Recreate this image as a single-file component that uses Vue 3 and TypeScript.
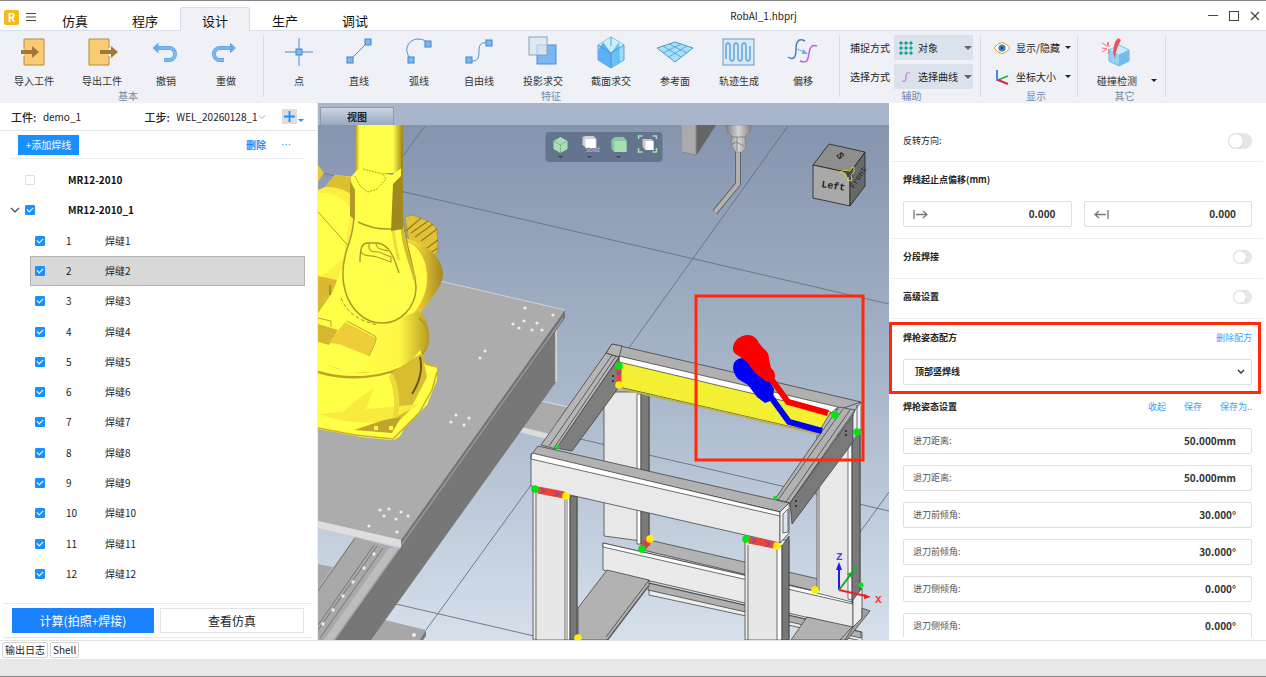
<script setup lang="ts">
import { ref } from 'vue'

interface Tool { label: string; icon: string; wide?: boolean }
interface Seam { id: number; name: string; checked: boolean }
interface Field { id: string; label: string; value: string }

const tabs = ['仿真', '程序', '设计', '生产', '调试']
const activeTab = ref('设计')

const node = (x: number, y: number) =>
  `<rect x="${x - 3}" y="${y - 3}" width="6" height="6" fill="#7ab8f5" stroke="#4385c7"/>`

const basicTools: Tool[] = [
  { label: '导入工件', wide: true, icon: '<path d="M5 12V2h20v26H5v-9" fill="#fbcb74" stroke="#b58a3e"/><path d="M2 13h11v-4l7 6-7 6v-4H2z" fill="#a07838"/>' },
  { label: '导出工件', wide: true, icon: '<path d="M22 11V2H2v26h20v-9" fill="#fbcb74" stroke="#b58a3e"/><path d="M13 13h11v-4l7 6-7 6v-4H13z" fill="#a07838"/>' },
  { label: '撤销', icon: '<path d="M6 11h12a6 6 0 0 1 0 12h-5" fill="none" stroke="#5c9fe0" stroke-width="4"/><path d="M6 11h12a6 6 0 0 1 0 12h-5" fill="none" stroke="#7ab8f5" stroke-width="2.6"/><path d="M1.500 11l6-5.500v11z" fill="#6aabec"/>' },
  { label: '重做', icon: '<path d="M20 11H9a6 6 0 0 0 0 12h4" fill="none" stroke="#5c9fe0" stroke-width="4"/><path d="M20 11H9a6 6 0 0 0 0 12h4" fill="none" stroke="#7ab8f5" stroke-width="2.6"/><path d="M25 11l-6-5.500v11z" fill="#6aabec"/>' }
]

const featureTools: Tool[] = [
  { label: '点', icon: '<path d="M1 15h28M15 1v28" stroke="#4b8fce"/>' + node(15, 15) },
  { label: '直线', icon: '<path d="M6 23L24 5" stroke="#4b8fce"/>' + node(6, 23) + node(24, 5) },
  { label: '弧线', icon: '<path d="M7 22C-2 13 5 2 14 2c5 0 8 2 11 5" fill="none" stroke="#4b8fce"/>' + node(7, 23) + node(24, 7) },
  { label: '自由线', icon: '<path d="M5 24c7 0 10 0 10-10 0-8 3-9 10-8" fill="none" stroke="#4b8fce"/>' + node(5, 23) + node(25, 6) },
  { label: '投影求交', wide: true, icon: '<rect x="9" y="8" width="19" height="19" fill="#7ab6f4" stroke="#4f8fd2"/><rect x="1" y="0" width="18" height="18" fill="#dce9f1" fill-opacity=".9" stroke="#8ba2b2"/><path d="M9 18V8h10" fill="none" stroke="#a9cdea"/>' },
  { label: '截面求交', wide: true, icon: '<path d="M15 0l13 8v15l-13 8-13-8V8z" fill="#9bdcfb" stroke="#5ba3d2"/><path d="M15 0l13 8-13 8L2 8z" fill="#c9eefc"/><path d="M7 5l8 11v15L2 23V14z" fill="#5cb0f4"/><path d="M15 16l8-11 1 20-9 6z" fill="#69c0f6"/><path d="M2 8l13 8 13-8M15 16v15M15 0v9" fill="none" stroke="#3f8fc9" stroke-width=".8"/>' },
  { label: '参考面', icon: '<path d="M-3 11l18-6 18 6-18 14z" fill="#a4e0fc" stroke="#5796c9"/><path d="M3 9l18 11M9 7l18 9M3 16L21 7M9 20l18-11" stroke="#5796c9" stroke-width=".8"/>' },
  { label: '轨迹生成', wide: true, icon: '<rect x="-1" y="2" width="31" height="26" fill="#dceaf3" stroke="#6d9cc2"/><path d="M2 22V8q2-4 4 0v14q2 4 4 0V8q2-4 4 0v14q2 4 4 0V8q2-4 4 0v14q2 4 4 0V9" fill="none" stroke="#72aee8" stroke-width="1.800"/>' },
  { label: '偏移', icon: '<path d="M0 20c6 4 8 0 8-8S11 1 17 4" fill="none" stroke="#4383bd" stroke-width="1.500"/><path d="M12 24c8 3 8-2 9-8s3-9 8-7" fill="none" stroke="#c65de6" stroke-width="1.500"/><path d="M9 12l7 3" stroke="#69aef0"/><path d="M15 12l5 5-6 0z" fill="#69aef0"/>' }
]

const seams = ref<Seam[]>(Array.from({ length: 12 }, (_, i) => ({ id: i + 1, name: `焊缝${i + 1}`, checked: true })))
const selected = ref(2)
const firstGroup = ref(false)
const secondGroup = ref(true)

const startOffset = ref('0.000')
const endOffset = ref('0.000')

const fields = ref<Field[]>([
  { id: 'in-dist', label: '进刀距离:', value: '50.000mm' },
  { id: 'out-dist', label: '退刀距离:', value: '50.000mm' },
  { id: 'in-front', label: '进刀前倾角:', value: '30.000°' },
  { id: 'out-front', label: '退刀前倾角:', value: '30.000°' },
  { id: 'in-side', label: '进刀侧倾角:', value: '0.000°' },
  { id: 'out-side', label: '退刀侧倾角:', value: '0.000°' }
])

const tableHoles = [
  [525, 308], [553, 315], [524, 321], [537, 323], [519, 328], [532, 330], [513, 324], [542, 330],
  [485, 351], [480, 358], [456, 415], [469, 418], [451, 422], [464, 425],
  [389, 509], [401, 512], [384, 516], [396, 519], [380, 510], [408, 516], [369, 526], [397, 532]
]
const railHoles = [[374, 554], [364, 568], [353, 582], [343, 596], [333, 610], [323, 624]]
const greenNodes = [[619, 366], [535, 489], [746, 539], [642, 549], [835, 415], [857, 432]]
const yellowNodes = [[619, 385], [566, 496], [777, 546], [650, 539], [815, 590], [578, 638]]
</script>

<template>
  <div class="app">
    <header class="titlebar">
      <div class="brand">
        <svg class="logo" viewBox="0 0 15 15"><rect width="15" height="15" rx="2" fill="#f5b91d" /><text x="7.500" y="11.500" text-anchor="middle" fill="#fff" font-size="11" font-weight="700">R</text></svg>
        <button class="plain" aria-label="菜单"><svg width="12" height="10" viewBox="0 0 12 10"><path d="M1 1.500h10M1 5h10M1 8.500h10" stroke="#444" /></svg></button>
      </div>
      <nav class="tabs">
        <button v-for="t in tabs" :key="t" class="tab" :class="{ active: t === activeTab }" @click="activeTab = t">{{ t }}</button>
      </nav>
      <div class="doc-title">RobAI_1.hbprj</div>
      <div class="win-controls">
        <button class="plain" aria-label="最小化"><svg width="10" height="10" viewBox="0 0 10 10"><path d="M0 4.500h10" stroke="#444" /></svg></button>
        <button class="plain" aria-label="最大化"><svg width="10" height="10" viewBox="0 0 10 10"><rect x=".5" y=".5" width="9" height="9" fill="none" stroke="#444" /></svg></button>
        <button class="plain" aria-label="关闭"><svg width="10" height="10" viewBox="0 0 10 10"><path d="M1 1l8 8M9 1l-8 8" stroke="#444" stroke-width="1.200" /></svg></button>
      </div>
    </header>

    <section class="ribbon">
      <div class="group basic">
        <div class="tools">
          <button v-for="t in basicTools" :key="t.label" class="tool" :class="{ wide: t.wide }">
            <svg viewBox="0 0 30 30" v-html="t.icon" /><span>{{ t.label }}</span>
          </button>
        </div>
        <div class="group-name">基本</div>
      </div>
      <div class="group feature">
        <div class="tools">
          <button v-for="t in featureTools" :key="t.label" class="tool" :class="{ wide: t.wide }">
            <svg viewBox="0 0 30 30" v-html="t.icon" /><span>{{ t.label }}</span>
          </button>
        </div>
        <div class="group-name">特征</div>
      </div>
      <div class="group assist">
        <div class="stack">
          <div class="pick">
            <label for="snap">捕捉方式</label>
            <div class="combo">
              <svg width="14" height="14" viewBox="0 0 14 14"><path d="M2 0v14M7 0v14M12 0v14M0 2h14M0 7h14M0 12h14" stroke="#7fc9c4" /><g fill="#14a098"><circle v-for="n in 9" :key="n" :cx="2 + ((n - 1) % 3) * 5" :cy="2 + Math.floor((n - 1) / 3) * 5" r="1.600" /></g></svg>
              <select id="snap"><option>对象</option></select><i class="caret grey" />
            </div>
          </div>
          <div class="pick">
            <label for="sel">选择方式</label>
            <div class="combo">
              <svg width="14" height="14" viewBox="0 0 14 14"><path d="M3 11c4 1 4-1 4-4s0-5 4-4" fill="none" stroke="#c77be8" stroke-width="1.200" /></svg>
              <select id="sel"><option>选择曲线</option></select><i class="caret grey" />
            </div>
          </div>
        </div>
        <div class="group-name">辅助</div>
      </div>
      <div class="group display">
        <div class="stack">
          <button class="row-tool">
            <svg width="16" height="12" viewBox="0 0 16 12"><path d="M0 6q8-11 16 0-8 11-16 0z" fill="#fff" stroke="#d5a033" /><circle cx="8" cy="6" r="3.500" fill="#3e7cc4" /><circle cx="8" cy="6" r="1.300" fill="#173f74" /></svg>
            <span>显示/隐藏</span><i class="caret" />
          </button>
          <button class="row-tool">
            <svg width="16" height="16" viewBox="0 0 16 16"><path d="M4 11l10-4" stroke="#13b545" stroke-width="1.800" /><path d="M4 11l10 4" stroke="#e8262d" stroke-width="2" /><path d="M3 1v11" stroke="#1d6fe8" stroke-width="1.600" /></svg>
            <span>坐标大小</span><i class="caret" />
          </button>
        </div>
        <div class="group-name">显示</div>
      </div>
      <div class="group other">
        <div class="tools">
          <button class="tool wide">
            <svg viewBox="0 0 30 30"><path d="M7 13l10-5 10 5v11l-10 5-10-5z" fill="#8fd3f7" stroke="#6fb3da" /><path d="M7 13l10-5 10 5-10 5z" fill="#c2ebfc" stroke="#7fc1e4" stroke-width=".6" /><path d="M17 18v11l10-5V13z" fill="#74bdea" /><path d="M13 5l3-4 3 2-3 6-2 6-1 7-2-7 1-6z" fill="#e95460" /><path d="M0 6l5 3 1-4 1 5M0 15l5-3-5-1M6 17l1-5" fill="none" stroke="#f0737a" /></svg>
            <span>碰撞检测</span>
          </button>
          <i class="caret low" />
        </div>
        <div class="group-name">其它</div>
      </div>
    </section>

    <main class="work">
      <aside class="left">
        <div class="job">
          <b>工件:</b><span class="part">demo_1</span>
          <label for="step">工步:</label>
          <select id="step"><option>WEL_20260128_1</option></select>
          <svg width="6" height="4" viewBox="0 0 6 4"><path d="M0 .5l3 3 3-3" fill="none" stroke="#aaa" /></svg>
          <button class="plus" aria-label="新增"><svg width="11" height="11" viewBox="0 0 11 11"><path d="M5.500 0v11M0 5.500h11" stroke="#1890ff" stroke-width="1.800" /></svg></button>
          <i class="caret blue" />
        </div>
        <div class="actions">
          <button class="add">+添加焊线</button>
          <button class="plain remove">删除</button>
          <button class="plain more">···</button>
        </div>
        <ul class="tree">
          <li class="parent"><span class="arrow" /><input id="g1" v-model="firstGroup" type="checkbox" class="check"><label for="g1">MR12-2010</label></li>
          <li class="parent"><span class="arrow"><svg width="10" height="6" viewBox="0 0 10 6"><path d="M1 1l4 4 4-4" fill="none" stroke="#444" stroke-width="1.200" /></svg></span><input id="g2" v-model="secondGroup" type="checkbox" class="check"><label for="g2">MR12-2010_1</label></li>
          <li v-for="s in seams" :key="s.id" class="seam" :class="{ selected: s.id === selected }" @click="selected = s.id">
            <input :id="'seam' + s.id" v-model="s.checked" type="checkbox" class="check"><span class="num">{{ s.id }}</span><label :for="'seam' + s.id">{{ s.name }}</label>
          </li>
        </ul>
        <div class="run">
          <button class="primary">计算(拍照+焊接)</button>
          <button class="secondary">查看仿真</button>
        </div>
      </aside>

      <section class="center">
        <div class="view-tabs"><button class="view-tab">视图</button></div>
        <div class="viewport">
          <svg class="scene" viewBox="318 125 571 515" preserveAspectRatio="xMidYMid slice">
            <defs>
              <linearGradient id="sky" x1="0" y1="0" x2="0" y2="1"><stop offset="0" stop-color="#8695ae" /><stop offset=".5" stop-color="#a8b6ca" /><stop offset="1" stop-color="#d6e0eb" /></linearGradient>
              <linearGradient id="metal" x1="0" y1="0" x2="1" y2="0"><stop offset="0" stop-color="#808080" /><stop offset=".5" stop-color="#d4d4d4" /><stop offset="1" stop-color="#858585" /></linearGradient>
              <linearGradient id="arm" x1="0" y1="0" x2="1" y2="0"><stop offset="0" stop-color="#c4a526" /><stop offset=".08" stop-color="#ffff4a" /><stop offset=".8" stop-color="#ffff4a" /><stop offset="1" stop-color="#a88f20" /></linearGradient>
              <linearGradient id="drum" x1="0" y1="0" x2="1" y2="0"><stop offset="0" stop-color="#ffe93f" /><stop offset=".45" stop-color="#eacb37" /><stop offset="1" stop-color="#a38920" /></linearGradient>
              <linearGradient id="waist" x1="0" y1="0" x2="1" y2="0"><stop offset="0" stop-color="#ffff48" /><stop offset=".65" stop-color="#fff744" /><stop offset="1" stop-color="#b99c24" /></linearGradient>
            </defs>
            <rect x="318" y="125" width="571" height="515" fill="url(#sky)" />
            <g stroke="#66727f" stroke-width=".9">
              <path d="M425 126L400 160M318 172L889 304M788 126L628 349M531 485L426 630M396 604L534 636M576 438L889 511M889 492L858 535" />
            </g>

            <!-- work table and rail -->
            <path d="M318 564l15 3-15 22zM385 620l41 10-4 10h-53z" fill="#a7a7a7" />
            <path d="M426 630v6l-3 4h-3z" fill="#777" />
            <path d="M541 401l27 6-20 26-27-6z" fill="#aaa" /><path d="M521 427l28 7-2 5-28-7z" fill="#dcdcdc" />
            <path d="M541 401l27 6" stroke="#ddd" />
            <path d="M355 537l46 12-65 91h-18v-51z" fill="#a9a9a9" />
            <path d="M355 538l-37 53M374 545l-56 80M383 548l-63 90M377 546l-59 84" stroke="#686868" stroke-width=".8" />
            <path d="M389 548l-65 92h9l66-93z" fill="#bdbdbd" />
            <path d="M556 329v53L371 640h-36l66-93z" fill="#777" />
            <path d="M556 330v52" stroke="#ddd" stroke-width="1.500" />
            <path d="M318 260l122 21 125 29-164 230-83-19z" fill="#acacac" />
            <path d="M440 281l125 29" stroke="#d2d2d2" />
            <path d="M318 521l83 19v7l-83-19z" fill="#dedede" /><path d="M565 310v8L401 547v-7z" fill="#747474" />
            <path d="M563 318L401 545" stroke="#bcbcbc" stroke-width=".8" />
            <g fill="#ededed"><circle v-for="(h, i) in tableHoles" :key="'t' + i" :cx="h[0]" :cy="h[1]" r="1.600" /><circle v-for="(h, i) in railHoles" :key="'r' + i" :cx="h[0]" :cy="h[1]" r="1.700" /><circle cx="414" cy="635" r="2" /></g>

            <!-- robot arm -->
            <path d="M318 165l6 8-6 9z" fill="#e5c837" />
            <path d="M405 217l8-2 17 7 7 7 1 22-7 7-22-16z" fill="#e1c237" stroke="#a18924" stroke-width=".6" />
            <path d="M411 233l17-12M415 237l18-13M421 241l16-12M427 248l11-8M430 253l8-5M406 231l15-13" stroke="#927b1f" stroke-width="1.200" />
            <path d="M404 238c18 3 39 18 39 36 0 12-15 28-24 42l-20 9z" fill="url(#drum)" />
            <path d="M402 240c22 3 32 34 21 59-7 17-18 22-28 24z" fill="#fffb47" stroke="#cbb02b" stroke-width=".7" />
            <path d="M318 190l7-3 10-12 20 2 4 18-7 60-20 65-14 5z" fill="#fcef42" />
            <path d="M325 187l10-12 17 2v18c-9-7-18-8-27-8z" fill="#dcc034" />
            <path d="M318 193c15-1 27 4 33 18l-8 48-25 20z" fill="#ffff4a" />
            <path d="M318 212l34 38" stroke="#bd9d27" />
            <path d="M318 276l19 4-6 26-13 9z" fill="#d8b92f" /><path d="M330 285v10l6-3" fill="none" stroke="#806d20" />
            <path d="M342 268l-10 25-14 20v49l90 30 15-60-55-20z" fill="#ffff48" />
            <path d="M341 298c6 16 21 24 37 27" fill="none" stroke="#ac9125" stroke-dasharray="4 2" />
            <path d="M318 324l20 6-9 15-11-3z" fill="#d5b72f" />
            <path d="M377 326l42-15c10 9 12 23 8 37-9 18-37 29-61 26l-21-10 26-5z" fill="url(#waist)" />
            <path d="M338 331l7-9 31 16-7 18-30-12-10-1z" fill="#eecd38" />
            <path d="M318 318l13 3v6M347 321l28 15c3 3-1 9-6 20" fill="none" stroke="#c0a129" />
            <path d="M419 318c10 8 13 24 4 35-10 14-37 22-69 20" fill="none" stroke="#b69a26" stroke-width="2" />
            <path d="M318 360c25 16 62 17 94 0l8-10 6 14 11 2v14l-10 25-23 23c-2 8-7 12-13 12l-30-3-43-8z" fill="#ffff46" />
            <path d="M318 372c30 9 65 7 94-9" fill="none" stroke="#bea128" stroke-width="2.500" />
            <path d="M391 373l31-20 5 24-17 33-13 13z" fill="#dabc31" />
            <path d="M350 405l-12 13 23 4 13-34zM318 414c25 9 63 13 80 2l22-12" fill="#f9ea40" />
            <path d="M391 375c7 17 7 33 3 46" fill="none" stroke="#eadb3c" stroke-width="5" />
            <path d="M420 357c3 13-1 26-8 37" stroke="#66591b" stroke-width="2" fill="none" />
            <path d="M354 430l30-10 17-3-9 16z" fill="#c1a42b" />
            <path d="M318 428l37 7 38 4 26-26 13-23 5-18M421 356l5 8 11 3" fill="none" stroke="#cdae2b" stroke-width="1.500" />
            <g fill="#fff64b"><rect x="374" y="426" width="4" height="4" /><rect x="389" y="426" width="4" height="4" /><rect x="427" y="372" width="4" height="4" /></g>
            <path d="M354 218c-1 14-4 23-7 31-4 13-6 27-2 41 5 20 21 34 38 33 17 0 32-15 33-34 0-18-12-48-13-72z" fill="#ffff4b" stroke="#b2962a" stroke-width="1.500" />
            <path d="M393 230c2 15 3 22 6 30" fill="none" stroke="#eddb3b" stroke-width="3" />
            <path d="M402 226c1 22 9 37 13 54" fill="none" stroke="#d3ba2e" stroke-width="3" />
            <path d="M360 262c0-12 1-19 8-19h9c12 1 17 14 22 30" fill="none" stroke="#aa9126" stroke-width="1.300" />
            <path d="M361 251c1 6 9 4 16 6l14 5v-5l-12-5c-6 0-11 0-10-8M376 243c0 6 5 6 12 8" fill="none" stroke="#b79d28" stroke-width="1.200" />
            <path d="M356 125h46v48H356z" fill="url(#arm)" />
            <path d="M351 177l6-7 5-1 30 6 11-8-4 64-16-1-24-7-9-8z" fill="#ffff47" />
            <path d="M393 184l8-8 1-51h1v104l-12 2z" fill="#a08a20" /><path d="M350 180l5 10v30l-5-4z" fill="#b49a25" />
            <path d="M363 169l20 5 3 5-9 10-9 3-8-6-5-10" fill="none" stroke="#9d861f" stroke-width=".8" stroke-dasharray="2 1" />
            <path d="M358 222q16 8 34 7" fill="none" stroke="#b1982a" stroke-width="1.500" />

            <!-- lower frame -->
            <g stroke="#333" stroke-width=".7" stroke-linejoin="round">
              <path d="M604 392h45v150l-45-6z" fill="#e8e8e8" /><path d="M637 394h4v150h-4z" fill="#fff" /><path d="M641 394h8v148l-8 2z" fill="#7b7b7b" />
              <path d="M649 583l213 49v9l-213-46z" fill="#ededed" /><path d="M648 583l213 49v6l-213-48z" fill="#b0b0b0" />
              <path d="M649 540l213 49-9 11-210-50z" fill="#b3b3b3" />
              <path d="M603 543l250 57v28l-250-58z" fill="#eaeaea" /><path d="M603 543l250 57v4l-250-57z" fill="#fff" />
              <path d="M817 435h43v163l-8 4-35-9z" fill="#e8e8e8" /><path d="M848 440h4v160l-4-1z" fill="#fff" /><path d="M852 441l8-13v165l-8 10z" fill="#797979" /><path d="M819 440v151" fill="none" />
              <path d="M853 600l9-12v30l-9 12z" fill="#eee" />
              <path d="M862 608l8 3-23 29h-11l16-12 10-10z" fill="#a0a0a0" />
              <path d="M607 570l42 10v6l-41 54h-30v-32z" fill="#b2b2b2" /><path d="M649 580l-43 57M648 586l-41 54" fill="none" />
              <path d="M807 617l46 10-8 13h-54z" fill="#b2b2b2" /><path d="M852 627l-12 13" />
            </g>
            <path d="M642 549l8-11" stroke="#e9423a" stroke-width="7" />

            <!-- upper frame -->
            <g stroke="#333" stroke-width=".7" stroke-linejoin="round">
              <path d="M612 344l249 58-23 8-232-57z" fill="#b0b0b0" />
              <path d="M619 356l219 51-8 7-211-49z" fill="#fff" />
              <path d="M619 362l212 50-13 21-199-46z" fill="#f3f033" />
              <path d="M622 388l196 45v2l-196-45z" fill="#b8b25c" stroke="none" />
              <path d="M619 357v30l-47 64-16-3z" fill="#7e7e7e" />
              <path d="M606 353l13 4-63 92-15-4z" fill="#b5b5b5" /><path d="M612 355l-63 91M616 356l-62 92" fill="none" />
              <path d="M606 353l6-9 10 2-3 11z" fill="#b5b5b5" />
              <path d="M855 410l6-8v29l-9 11v-24z" fill="#f0f0f0" /><path d="M852 440l9-11M857 405v28" />
              <path d="M839 407l16 3-65 93-15-4z" fill="#b1b1b1" /><path d="M843 409l-65 91M850 410l-64 92" fill="none" />
              <path d="M853 415v27l-61 82-2-21z" fill="#797979" />
              <path d="M533 486h44v154h-44z" fill="#e7e7e7" /><path d="M565 494h5v146h-5z" fill="#fff" /><path d="M570 496h7v144h-7z" fill="#777" /><path d="M536 490v150M567 498v142" />
              <path d="M745 540h44v100h-44z" fill="#e7e7e7" /><path d="M777 546h5v94h-5z" fill="#fff" /><path d="M782 546l7-10v104h-7z" fill="#777" /><path d="M748 545v95" />
              <path d="M538 446l251 57-9 9-248-58z" fill="#b1b1b1" />
              <path d="M531 454l249 58v31l-249-57z" fill="#e9e9e9" /><path d="M532 453l248 59v4l-249-57z" fill="#fff" />
              <path d="M780 512l9-9v30l-9 10z" fill="#f0f0f0" /><path d="M783 514l5-5v23l-5 1z" fill="#dce4ee" />
            </g>
            <g fill="#222"><circle cx="846" cy="431" r="1" /><circle cx="846" cy="435" r="1" /><circle cx="796" cy="501" r="1" /><circle cx="796" cy="506" r="1" /><circle cx="613" cy="376" r="1" /><circle cx="613" cy="381" r="1" /></g>
            <g stroke="#ef4338" stroke-width="7"><path d="M538 490l26 5M749 540l25 5" /><path d="M619 367v16" stroke-width="5" /></g>
            <g fill="none" stroke="#4055c7"><path d="M541 488l4 3-4 2M555 491l4 3-5 2M752 538l4 3-4 2M765 541l5 3-5 3M617 371l2 4 2-4M645 541l1 5 4-1" /></g>
            <g fill="#00e315"><circle v-for="(n, i) in greenNodes" :key="'g' + i" :cx="n[0]" :cy="n[1]" r="3.800" /><circle cx="775" cy="498" r="2" /><circle cx="558" cy="447" r="2" /><circle cx="861" cy="585" r="2.500" /><path d="M534 640q1-3 4 0z" /></g>
            <g fill="#fff000"><circle v-for="(n, i) in yellowNodes" :key="'y' + i" :cx="n[0]" :cy="n[1]" r="3.800" /></g>

            <!-- weld torches -->
            <path d="M768 393l21 29 33 9" fill="none" stroke="#0000fa" stroke-width="6" />
            <path d="M734 363q3-5 9-5l12 8 14 14 5 9-1 11-8 3-8-6-9-12-10-6q-7-8-4-16z" fill="#0000fa" />
            <path d="M769 376l19 26 40 11" fill="none" stroke="#fa0000" stroke-width="6" />
            <path d="M733 347q2-10 13-12 9-1 13 8l4 5q6 4 6 11l2 9q6 5 3 12-5 5-11-1l-7-5-9-12-8-6q-7-3-6-9z" fill="#fa0000" />

            <!-- hanging torch -->
            <path d="M682 125h14v30l-14-3z" fill="#aaa" /><path d="M696 125h20l-18 28-2 2z" fill="#656565" /><path d="M682 152l14 3v-30" fill="none" stroke="#888" />
            <path d="M738 151v33l-23 28" fill="none" stroke="#666" stroke-width="6" /><path d="M738 151v33l-23 28" fill="none" stroke="#b2b2b2" stroke-width="4" />
            <path d="M726 125h25q0 9-6 11l1 11-4 5h-6l-5-7 1-9q-6-3-6-11z" fill="url(#metal)" stroke="#777" stroke-width=".5" />
            <path d="M731 137h14M731 145l5-3 8 4M737 137v14" fill="none" stroke="#777" stroke-width=".8" />

            <!-- orientation cube -->
            <g stroke="#222" stroke-width=".8" stroke-linejoin="round">
              <path d="M829 144l36 8-15 21-37-8z" fill="#8e8e8e" /><path d="M813 165l37 8v33l-37-8z" fill="#a9a9a9" /><path d="M850 173l15-21v34l-15 20z" fill="#696969" />
            </g>
            <g class="cube-text">
              <text x="821" y="187" transform="rotate(9 821 187)">Left</text>
              <text x="854" y="189" transform="rotate(-58 854 189)" class="small">Front</text>
              <text x="836" y="155" transform="rotate(55 836 155)">S</text>
            </g>
            <path d="M845 171l7-2 1 9-6-1z" fill="#484848" /><path d="M840 172l5-2 5 1 2-4h2v5l-3 3 1 5-4 1-2-6z" fill="none" stroke="#d5cd31" />

            <!-- axes -->
            <g stroke-width="2"><path d="M839 590v-22" stroke="#1c1cec" /><path d="M839 590l12-16" stroke="#19a52d" /><path d="M839 590l27 6" stroke="#ec2020" /></g>
            <path d="M839 562l3 8h-6z" fill="#1c1cec" /><path d="M854 571l-2 7-5-4z" fill="#19a52d" /><path d="M871 597l-7 2v-5z" fill="#ec2020" />
            <g class="axis"><text x="836" y="560" fill="#4545eb">Z</text><text x="852" y="572" fill="#20ad35">Y</text><text x="875" y="603" fill="#ef3838">X</text></g>

            <rect x="696" y="296" width="167" height="164" fill="none" stroke="#ff2a0a" stroke-width="3" />
          </svg>
          <div class="view-tools">
            <button aria-label="视角"><svg viewBox="0 0 18 24"><path d="M9 2l7 4v8l-7 4-7-4V6z" fill="#a6dfb4" /><path d="M2 6l7 4 7-4M9 10v8" fill="none" stroke="#6da57c" stroke-dasharray="2 1" /><path d="M6 21h6l-3 2z" fill="#39445a" /></svg></button>
            <button aria-label="显示模式"><svg viewBox="0 0 18 24"><path d="M2 2l3-1h8l3 3v9H6l-4-3z" fill="#d1d1d1" /><path d="M5 4h10v9H5z" fill="#fff" /><text x="5" y="17" font-size="6" fill="#bfd0df">Solid</text><path d="M6 21h6l-3 2z" fill="#39445a" /></svg></button>
            <button aria-label="背景"><svg viewBox="0 0 18 24"><path d="M2 5l3-3h9l3 3v12H5l-3-3z" fill="#8ac99c" /><path d="M5 6h12v11H5z" fill="#a6dfb4" /><path d="M6 21h6l-3 2z" fill="#39445a" /></svg></button>
            <button aria-label="全部显示"><svg viewBox="0 0 18 24"><path d="M0 4V1h4M14 1h4v3M0 13v4h4M14 17h4v-4" fill="none" stroke="#a6dfb4" stroke-width="1.500" /><path d="M4 4h9l2 2v9H7l-3-3z" fill="#c8c8c8" /><path d="M7 6h8v9H7z" fill="#fff" /></svg></button>
          </div>
        </div>
      </section>

      <aside class="right">
        <div class="props">
          <div class="row first"><label for="reverse" class="light">反转方向:</label><input id="reverse" type="checkbox" class="switch large"></div>
          <div class="offsets">
            <h3>焊线起止点偏移(mm)</h3>
            <div class="pair">
              <div class="field"><label for="so" aria-label="起点偏移"><svg width="15" height="9" viewBox="0 0 15 9"><path d="M1 0v9M3 4.500h11M10 1l4 3.500L10 8" fill="none" stroke="#777" stroke-width="1.300" /></svg></label><input id="so" v-model="startOffset"></div>
              <div class="field"><label for="eo" aria-label="终点偏移"><svg width="15" height="9" viewBox="0 0 15 9"><path d="M14 0v9M12 4.500H1M5 1L1 4.500 5 8" fill="none" stroke="#777" stroke-width="1.300" /></svg></label><input id="eo" v-model="endOffset"></div>
            </div>
          </div>
          <div class="row"><label for="segment">分段焊接</label><input id="segment" type="checkbox" class="switch"></div>
          <div class="row"><label for="advanced">高级设置</label><input id="advanced" type="checkbox" class="switch"></div>
          <section class="recipe">
            <div class="head"><label for="recipe">焊枪姿态配方</label><a href="#">删除配方</a></div>
            <div class="recipe-select">
              <select id="recipe"><option>顶部竖焊线</option></select>
              <svg width="8" height="6" viewBox="0 0 8 6"><path d="M1 1l3 3 3-3" fill="none" stroke="#333" stroke-width="1.400" /></svg>
            </div>
          </section>
          <section class="pose">
            <div class="head"><h3>焊枪姿态设置</h3><span class="links"><a href="#">收起</a><a href="#">保存</a><a href="#">保存为..</a></span></div>
            <div v-for="f in fields" :key="f.id" class="field"><label :for="f.id">{{ f.label }}</label><input :id="f.id" v-model="f.value"></div>
          </section>
        </div>
      </aside>
    </main>

    <div class="logs"><button>输出日志</button><button>Shell</button></div>
    <footer class="status" />
  </div>
</template>

<style>
body { margin: 0; }
</style>

<style scoped>
* { box-sizing: border-box; }
.app { height: 100vh; min-height: 600px; display: flex; flex-direction: column; overflow: hidden; border-top: 1px solid #858585; background: #fff; color: #222; font-family: "Noto Sans CJK SC", "Noto Sans", sans-serif; font-size: 10px; line-height: 14px; }
button, input, select { font: inherit; color: inherit; margin: 0; padding: 0; border: 0; background: none; }
button { cursor: pointer; }
select { appearance: none; outline: 0; min-width: 0; }
h3 { margin: 0; font-size: 9px; font-weight: 700; }
svg { display: block; flex: none; overflow: visible; }
a { color: #3ba0ff; text-decoration: none; }
.plain { display: flex; }

.titlebar { flex: none; height: 30px; display: flex; align-items: stretch; border-bottom: 1px solid #d8e0eb; }
.brand { width: 40px; display: flex; align-items: center; gap: 6px; padding: 3px 0 0 4px; }
.logo { width: 15px; height: 15px; }
.tabs { display: flex; padding-top: 6px; margin-bottom: -1px; }
.tab { width: 70px; height: 24px; border: 1px solid transparent; border-bottom: 0; border-radius: 3px 3px 0 0; font-size: 13px; line-height: 18px; padding-top: 2px; color: #111; }
.tab.active { background: #eff1f6; border-color: #d5ddea; }
.doc-title { flex: 1; text-align: center; line-height: 30px; }
.win-controls { width: 129px; padding-right: 6px; display: flex; justify-content: flex-end; align-items: center; gap: 11px; }

.ribbon { flex: none; height: 72px; display: flex; background: #eff1f6; }
.group { display: flex; flex-direction: column; position: relative; }
.group::after { content: ""; position: absolute; right: 0; top: 5px; bottom: 6px; width: 1px; background: #d5dce7; }
.basic { padding-right: 8px; }
.feature { padding: 0 7px 0 5px; }
.tools { display: flex; height: 58px; padding-top: 6px; }
.tool { width: 60px; display: flex; flex-direction: column; align-items: center; gap: 7px; color: #333; }
.tool.wide { width: 68px; }
.tool svg { width: 30px; height: 30px; }
.group-name { text-align: center; color: #7589aa; line-height: 14px; }
.stack { height: 58px; padding-top: 4px; display: flex; flex-direction: column; gap: 4px; }
.assist { padding: 0 8px 0 10px; }
.pick { display: flex; align-items: center; height: 25px; gap: 4px; }
.combo { display: flex; align-items: center; width: 79px; height: 25px; background: #dce2ec; padding: 0 1px 0 5px; gap: 5px; }
.combo select { flex: 1; }
.caret { flex: none; width: 0; height: 0; border: 3px solid transparent; border-top: 3px solid #222; border-bottom: 0; }
.caret.grey { border-width: 4px 4px 0; border-top-color: #666; }
.display { width: 97px; padding-left: 13px; }
.row-tool { display: flex; align-items: center; gap: 6px; height: 25px; }
.row-tool span { width: 43px; text-align: left; white-space: nowrap; }
.other { width: 88px; padding-left: 5px; }
.caret.low { margin-top: 42px; }

.work { flex: 1; min-height: 0; display: flex; }
.left { flex: none; width: 318px; display: flex; flex-direction: column; border-right: 1px solid #eee; }
.job { height: 28px; display: flex; align-items: center; padding: 0 13px 0 11px; border-bottom: 1px solid #e6e6e6; white-space: nowrap; }
.job b, .job label { font-size: 11px; font-weight: 500; width: 32px; }
.job .part { width: 102px; }
.job select { width: 83px; }
.plus { margin-left: 17px; width: 15px; height: 15px; background: #dedede; display: grid; place-items: center; }
.caret.blue { margin: 8px 0 0 1px; border-top-color: #1890ff; }
.actions { display: flex; align-items: center; margin: 0 12px 0 10px; height: 28px; padding: 0 14px 0 8px; border-bottom: 1px solid #ececec; }
.add { width: 61px; height: 20px; background: #1890ff; color: #fff; margin-right: auto; }
.remove { color: #1890ff; font-weight: 700; margin-right: 15px; }
.more { color: #1890ff; font-family: "Liberation Sans", sans-serif; }
.tree { flex: 1; min-height: 0; margin: 6px 12px 14px 10px; padding: 0; list-style: none; display: grid; grid-auto-rows: 1fr; }
.tree li { display: flex; align-items: center; }
.parent label { font-weight: 700; margin-left: 33px; color: #111; }
.arrow { width: 15px; }
.seam { margin-left: 20px; padding-left: 4px; border: 1px solid transparent; }
.seam.selected { background: #d8d8d8; border-color: #b4b4b4; }
.num { margin-left: 21px; width: 39px; }
.check { appearance: none; flex: none; width: 10px; height: 10px; border: 1px solid #e0e0e0; border-radius: 1px; display: grid; place-items: center; }
.check:checked { background: #1890ff; border-color: #1890ff; }
.check:checked::after { content: ""; width: 3px; height: 5px; margin-bottom: 2px; border: solid #fff; border-width: 0 1px 1px 0; transform: rotate(45deg); }
.run { flex: none; margin: 0 4px 2px 3px; padding: 4px 9px; display: flex; gap: 6px; border: solid #e9e9e9; border-width: 1px 0; }
.run button { flex: 1; height: 25px; font-size: 12px; line-height: 18px; }
.primary { background: #1b82ff; color: #fff; }
.run .secondary { border: 1px solid #e3e3e3; }

.center { flex: 1; min-width: 0; display: flex; flex-direction: column; }
.view-tabs { height: 22px; flex: none; background: #a9b5cb; padding: 4px 2px 0; }
.view-tab { width: 74px; height: 18px; border: 1px solid #8b99b1; border-bottom: 0; background: linear-gradient(#cbd4e1, #9aa9bf); font-weight: 700; }
.viewport { flex: 1; min-height: 0; position: relative; overflow: hidden; }
.scene { width: 100%; height: 100%; }
.cube-text { font-family: "Liberation Mono", monospace; font-size: 10px; font-weight: 700; fill: #222; }
.cube-text .small { font-size: 8px; font-weight: 400; }
.axis { font-family: "Liberation Mono", monospace; font-size: 11px; font-weight: 700; }
.view-tools { position: absolute; top: 7px; left: 50%; transform: translateX(-50%); display: flex; justify-content: space-between; width: 117px; height: 30px; padding: 3px 6px; border-radius: 4px; background: #64738e; }
.view-tools button { width: 18px; height: 24px; }
.view-tools svg { width: 18px; height: 24px; }

.right { flex: none; width: 377px; padding-bottom: 3px; display: flex; }
.props { flex: 1; min-width: 0; overflow: hidden; }
.row, .offsets { margin: 0 3px; border-bottom: 1px solid #efefef; }
.row { height: 40px; padding: 0 11px 3px; display: flex; justify-content: space-between; align-items: center; font-size: 9px; font-weight: 700; }
.row.first { height: 59px; padding-top: 18px; padding-bottom: 0; }
.row .light { font-weight: 400; }
.switch { appearance: none; width: 19px; height: 14px; border-radius: 7px; background: #e6e6e6; display: flex; }
.switch::after { content: ""; width: 12px; height: 12px; margin: 1px; border-radius: 50%; background: #fff; box-shadow: 0 0 1px #aaa; }
.switch:checked { background: #1890ff; justify-content: flex-end; }
.switch.large { width: 24px; height: 16px; border-radius: 8px; }
.switch.large::after { width: 14px; height: 14px; }
.offsets { height: 77px; padding: 11px 11px 0; }
.pair { display: grid; grid-template-columns: 1fr 1fr; gap: 12px; margin-top: 14px; }
.field { display: flex; align-items: center; justify-content: space-between; height: 26px; border: 1px solid #dedede; border-radius: 2px; padding: 0 15px 0 9px; }
.field label { flex: none; font-size: 9px; color: #555; }
.field input { flex: 1; min-width: 0; width: 0; text-align: right; font-weight: 700; color: #333; outline: 0; }
.recipe { margin: 3px 5px 0 0; border: 3px solid #ff2a0a; padding: 6px 6px 6px 11px; }
.head { display: flex; justify-content: space-between; align-items: center; font-size: 9px; height: 14px; }
.head label { font-weight: 700; }
.recipe-select { margin-top: 14px; height: 26px; border: 1px solid #dedede; border-radius: 2px; display: flex; align-items: center; padding: 0 6px 0 11px; }
.recipe-select select { flex: 1; height: 24px; font-size: 9px; font-weight: 700; }
.pose { padding: 6px 14px 0; }
.pose .field { margin-top: 11px; }
.pose .head + .field { margin-top: 14px; }
.links { display: flex; gap: 18px; }

.logs { flex: none; height: 19px; border-top: 1px solid #e3e3e3; display: flex; gap: 2px; padding: 1px 2px; }
.logs button { height: 16px; padding: 0 2px; border: 1px solid #d4d4d4; border-radius: 2px; line-height: 14px; }
.status { flex: none; height: 18px; background: #e8e8e8; border-bottom: 1px solid #858585; }
</style>
